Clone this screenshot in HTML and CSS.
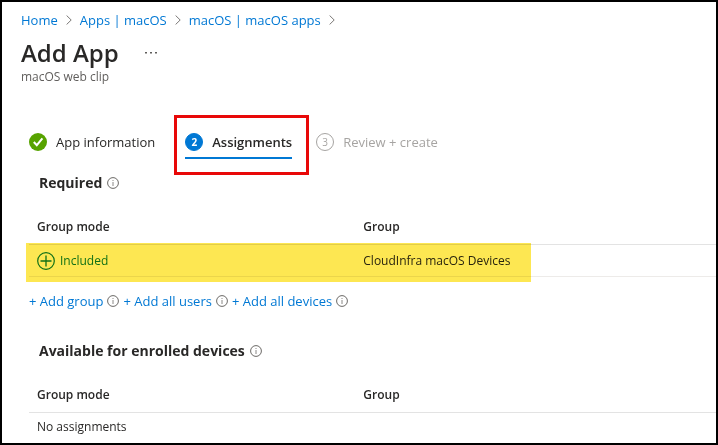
FILE: index.html
```html
<!DOCTYPE html>
<html lang="en">
<head>
<meta charset="utf-8">
<meta name="viewport" content="width=device-width, initial-scale=1">
<title>Add App</title>
<link rel="stylesheet" href="styles.css">
</head>
<body>
<svg class="symbols" aria-hidden="true">
  <symbol id="info" viewBox="0 0 12 12">
    <circle cx="6" cy="6" r="5.4" fill="none" stroke="#6b6966" stroke-width="1"/>
    <path d="M6 5v4M6 3v1" stroke="#8a8886" stroke-width="1" fill="none"/>
  </symbol>
  <symbol id="chevron" viewBox="0 0 6 10">
    <path d="M.6.5 5.2 5 .6 9.5" stroke="#7a7876" stroke-width="1" fill="none"/>
  </symbol>
</svg>
<div class="blade">
  <nav class="breadcrumb" aria-label="Breadcrumb">
    <a href="#">Home</a>
    <svg class="chevron"><use href="#chevron"/></svg>
    <a href="#">Apps | macOS</a>
    <svg class="chevron"><use href="#chevron"/></svg>
    <a href="#">macOS | macOS apps</a>
    <svg class="chevron"><use href="#chevron"/></svg>
  </nav>
  <header class="heading">
    <h1>Add App</h1>
    <button class="more" type="button" aria-label="More">
      <svg viewBox="0 0 12 2"><path d="M0 0h2v1.500H0zM5 0h2v1.500H5zM10 0h2v1.500h-2z"/></svg>
    </button>
  </header>
  <p class="subtitle">macOS web clip</p>

  <ol class="steps">
    <li>
      <button class="step" type="button">
        <svg class="done" viewBox="0 0 18 18"><circle cx="9" cy="9" r="9" fill="#57a300"/><path d="m4.8 9 3 3.2 5.6-6.8" fill="none" stroke="#fff" stroke-width="2"/></svg>
        <span>App information</span>
      </button>
    </li>
    <li class="marked">
      <button class="step current" type="button" aria-current="step"><span class="number">2</span><span>Assignments</span></button>
    </li>
    <li>
      <button class="step pending" type="button"><span class="number">3</span><span>Review + create</span></button>
    </li>
  </ol>

  <section>
    <h2>Required <svg class="info"><use href="#info"/></svg></h2>
    <table>
      <thead><tr><th class="mode">Group mode</th><th>Group</th></tr></thead>
      <tbody>
        <tr class="highlighted">
          <td><span class="included"><svg viewBox="0 0 18 18"><path d="M9 3.500v11M3.500 9h11" stroke="#107c41" stroke-width="1.300"/><circle cx="9" cy="9" r="8.300" fill="none" stroke="#107c41" stroke-width="1.200"/></svg>Included</span></td>
          <td>CloudInfra macOS Devices</td>
        </tr>
      </tbody>
    </table>
    <div class="actions">
      <a href="#">+ Add group</a><svg class="info"><use href="#info"/></svg>
      <a href="#">+ Add all users</a><svg class="info"><use href="#info"/></svg>
      <a href="#">+ Add all devices</a><svg class="info"><use href="#info"/></svg>
    </div>
  </section>

  <section class="available">
    <h2>Available for enrolled devices <svg class="info"><use href="#info"/></svg></h2>
    <table>
      <thead><tr><th class="mode">Group mode</th><th>Group</th></tr></thead>
      <tbody><tr class="empty"><td colspan="2">No assignments</td></tr></tbody>
    </table>
  </section>
</div>
</body>
</html>
```

FILE: styles.css
```css
* {
  box-sizing: border-box;
}

body {
  margin: 0;
  background: #fff;
  color: #292827;
  font: 13px/20px "Open Sans", "Noto Sans", sans-serif;
}

a {
  color: #0078d4;
  text-decoration: none;
}

button {
  padding: 0;
  border: 0;
  background: none;
  color: inherit;
  font: inherit;
}

svg {
  display: block;
  flex: none;
}

.symbols {
  position: absolute;
  width: 0;
  height: 0;
}

.blade {
  min-height: 100vh;
  padding-top: 8px;
  border: 2px solid #000;
}

.breadcrumb {
  display: flex;
  align-items: center;
  gap: 8px;
  padding-left: 19px;
}

.chevron {
  width: 6px;
  height: 10px;
}

.heading {
  display: flex;
  align-items: center;
  gap: 26px;
  margin-top: 7px;
  padding-left: 19px;
}

h1 {
  margin: 0;
  font-size: 24px;
  line-height: 32px;
  font-weight: 600;
}

.more svg {
  width: 12px;
  height: 2px;
  fill: #605e5c;
}

.subtitle {
  margin: 0;
  padding-left: 19px;
  color: #605e5c;
  font-size: 12px;
  line-height: 16px;
}

.steps {
  display: flex;
  gap: 24px;
  margin: 47px 0 0;
  padding: 0 0 0 27px;
  list-style: none;
}

.step {
  display: flex;
  align-items: center;
  gap: 9px;
  padding-bottom: 5px;
  border-bottom: 2px solid transparent;
}

.done {
  width: 18px;
  height: 18px;
}

.number {
  width: 18px;
  height: 18px;
  border: 1px solid currentColor;
  border-radius: 50%;
  font-size: 10px;
  line-height: 16px;
  text-align: center;
}

.current {
  border-color: #0078d4;
  font-weight: 600;
}

.current .number {
  border-color: #0078d4;
  background: #0078d4;
  color: #fff;
  font-weight: 700;
}

.pending {
  color: #a6a4a2;
}

.marked {
  position: relative;
  margin-left: 6px;
}

.marked::after {
  content: "";
  position: absolute;
  inset: -17px -17px -16px -11px;
  border: 3px solid #e80808;
  pointer-events: none;
}

section {
  margin-top: 14px;
  padding-left: 27px;
}

h2 {
  display: flex;
  align-items: center;
  gap: 5px;
  margin: 0 0 16px;
  padding-left: 10px;
  font-size: 14px;
  line-height: 20px;
  font-weight: 700;
}

.info {
  width: 12px;
  height: 12px;
}

table {
  width: 100%;
  table-layout: fixed;
  border-collapse: separate;
  border-spacing: 0;
}

th,
td {
  height: 32px;
  padding: 0 8px;
  border-bottom: 1px solid #edebe9;
  font-size: 12px;
  text-align: left;
}

th {
  height: 36px;
  border-color: #e3e3e3;
  font-weight: 600;
}

.mode {
  width: 47.5%;
}

.included {
  display: flex;
  align-items: center;
  gap: 5px;
  color: #107c41;
}

.included svg {
  width: 18px;
  height: 18px;
}

.highlighted {
  position: relative;
}

.highlighted td:last-child::after {
  content: "";
  position: absolute;
  inset: -2px 27% -5px -3px;
  background: #fde752;
  mix-blend-mode: multiply;
  pointer-events: none;
}

.actions {
  display: flex;
  align-items: center;
  gap: 4px;
  margin-top: 14px;
}

.available {
  margin-top: 30px;
}

.empty td {
  height: 28px;
  border: 0;
}
```
